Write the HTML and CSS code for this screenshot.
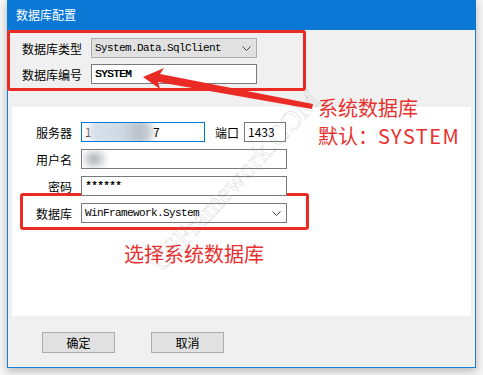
FILE: index.html
```html
<!DOCTYPE html>
<html lang="zh-CN">
<head>
  <meta charset="UTF-8">
  <meta name="viewport" content="width=device-width, initial-scale=1.0">
  <title>数据库配置</title>
  <link rel="stylesheet" href="styles.css">
</head>
<body>
  <div class="window">
    <div class="titlebar">数据库配置</div>

    <div class="top">
      <div class="group mark">
        <div class="row">
          <span class="label">数据库类型</span>
          <div class="field combo gray mono">System.Data.SqlClient<svg class="chev" width="9" height="5" viewBox="0 0 9 5"><path d="M0.5 0.5 L4.5 4.5 L8.5 0.5" fill="none" stroke="#444" stroke-width="1"/></svg></div>
        </div>
        <div class="row">
          <span class="label">数据库编号</span>
          <div class="field mono heavy">SYSTEM</div>
        </div>
      </div>
    </div>

    <div class="panel">
      <div class="row">
        <span class="label">服务器</span>
        <div class="field host focus">1<span class="blur blur-host"></span><span class="tail">7</span></div>
        <span class="label port-label">端口</span>
        <div class="field port">1433</div>
      </div>
      <div class="row">
        <span class="label">用户名</span>
        <div class="field wide"><span class="blur blur-user"></span></div>
      </div>
      <div class="row">
        <span class="label">密码</span>
        <div class="field wide mono heavy">******</div>
      </div>
      <div class="db-box mark">
        <div class="row">
          <span class="label">数据库</span>
          <div class="field wide combo mono">WinFramework.System<svg class="chev" width="9" height="5" viewBox="0 0 9 5"><path d="M0.5 0.5 L4.5 4.5 L8.5 0.5" fill="none" stroke="#444" stroke-width="1"/></svg></div>
        </div>
      </div>
      <p class="note">选择系统数据库</p>
    </div>

    <div class="footer">
      <button>确定</button>
      <button>取消</button>
    </div>
  </div>

  <!-- annotation layer -->
  <span class="watermark">CSFramework.COM</span>
  <svg class="arrow" width="483" height="375" viewBox="0 0 483 375">
    <polygon points="143,77 164,68 160,74 313,104 312,109 158,82 160,89" fill="#ea2a24"/>
  </svg>
  <div class="callout">
    <div>系统数据库</div>
    <div>默认：<span class="latin">SYSTEM</span></div>
  </div>
</body>
</html>
```

FILE: styles.css
```css
body {
  margin: 0;
  height: 375px;
  overflow: hidden;
  position: relative;
  background: #f5f5f5;
  font-family: "Noto Sans CJK SC", "Microsoft YaHei", sans-serif;
  font-size: 12px;
  color: #000;
}
.window {
  margin-left: 7px;
  width: 469px;
  height: 368px;
  box-sizing: border-box;
  border: 1px solid #1a7fd4;
  border-top: 0;
  background: #f0f0f0;
  box-shadow: 0 3px 8px rgba(0,0,0,0.25);
  display: flex;
  flex-direction: column;
}
.titlebar {
  height: 30px;
  margin: 0 -1px;
  padding-left: 9px;
  background: #0b78d6;
  color: #fff;
  line-height: 30px;
}
.top {
  height: 77px;
}
.mark {
  border: 3px solid #ea2a24;
  border-radius: 3px;
  box-sizing: border-box;
}
.group {
  margin-left: -1px;
  width: 299px;
  padding: 5px 0 4px 12px;
  display: flex;
  flex-direction: column;
  gap: 6px;
}
.row {
  display: flex;
  align-items: center;
  gap: 9px;
  height: 20px;
}
.label {
  white-space: nowrap;
}
.group .label {
  width: 60px;
}
.group .field {
  width: 166px;
}
.field {
  position: relative;
  height: 20px;
  box-sizing: border-box;
  border: 1px solid #7a7a7a;
  background: #fff;
  padding-left: 3px;
  line-height: 18px;
  overflow: hidden;
  white-space: nowrap;
}
.gray {
  background: #e1e1e1;
  border-color: #adadad;
}
.mono {
  font-family: "Liberation Mono", monospace;
  font-size: 11px;
  letter-spacing: -0.6px;
}
.heavy {
  text-shadow: 0.5px 0 0 #000;
}
.chev {
  position: absolute;
  right: 5px;
  top: 7px;
}
.panel {
  margin: 0 4px;
  height: 209px;
  box-sizing: border-box;
  background: #fff;
  padding: 15px 0 0 24px;
  display: flex;
  flex-direction: column;
  gap: 7px;
}
.panel .label {
  width: 36px;
  text-align: right;
}
.panel .port-label {
  width: 24px;
  margin-left: 1px;
  margin-right: -4px;
}
.host {
  width: 124px;
}
.focus {
  border-color: #0078d7;
}
.port {
  width: 42px;
}
.wide {
  width: 206px;
}
.blur {
  position: absolute;
  filter: blur(3px);
}
.blur-host {
  left: 6px;
  top: -3px;
  width: 66px;
  height: 24px;
  background: linear-gradient(90deg, #d9e2ec 0%, #cfd9e4 50%, #b9bfc8 80%, #d6dbe2 100%);
  border-radius: 10px;
}
.tail {
  position: absolute;
  left: 71px;
}
.blur-user {
  left: 2px;
  top: 1px;
  width: 22px;
  height: 16px;
  background: radial-gradient(circle at 45% 50%, #9aa0a8 0%, #cfd3d8 45%, #eceef0 100%);
  border-radius: 6px;
}
.db-box {
  align-self: flex-start;
  margin: -10px 0 0 -16px;
  padding: 7px 19px 4px 13px;
}
.note {
  margin: 7px 0 0 88px;
  font-size: 20px;
  line-height: 20px;
  color: #e8312f;
}
.footer {
  flex: 1;
  padding: 16px 0 0 34px;
  display: flex;
  align-items: flex-start;
  gap: 36px;
}
.footer button {
  width: 73px;
  height: 21px;
  padding: 0;
  background: #e1e1e1;
  border: 1px solid #adadad;
  font-family: inherit;
  font-size: 12px;
  color: #000;
}
.callout {
  position: absolute;
  left: 318px;
  top: 94px;
  font-size: 20px;
  line-height: 28px;
  color: #e8312f;
}
.latin {
  letter-spacing: 1.5px;
}
.arrow {
  position: absolute;
  left: 0;
  top: 0;
  pointer-events: none;
}
.watermark {
  position: absolute;
  left: 235px;
  top: 181px;
  transform: translate(-50%, -50%) rotate(-47deg);
  font-family: "Liberation Serif", serif;
  font-size: 28px;
  white-space: nowrap;
  color: transparent;
  -webkit-text-stroke: 0.5px rgba(150,150,150,0.4);
  pointer-events: none;
}
```
